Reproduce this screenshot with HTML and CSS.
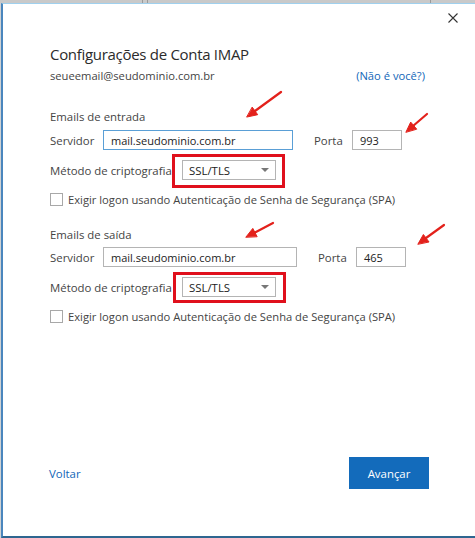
FILE: index.html
```html
<!DOCTYPE html>
<html lang="pt-BR">
<head>
<meta charset="utf-8">
<title>Configurações de Conta IMAP</title>
<link rel="stylesheet" href="styles.css">
</head>
<body>
<div class="backdrop"></div>
<div class="dialog">
  <div class="close-row">
    <svg class="close" width="10" height="10" viewBox="0 0 10 10"><path d="M0.5 0.5 L9.5 9.5 M9.5 0.5 L0.5 9.5" stroke="#333" stroke-width="1.1" fill="none"/></svg>
  </div>
  <h1 class="title">Configurações de Conta IMAP</h1>
  <div class="account-row">
    <span class="account">seueemail@seudominio.com.br</span>
    <a class="link">(Não é você?)</a>
  </div>

  <div class="section-title first">Emails de entrada</div>
  <div class="server-row">
    <span class="label server-label">Servidor</span>
    <div class="input input-focus in-server">mail.seudominio.com.br</div>
    <span class="label port-label">Porta</span>
    <div class="input in-port">993</div>
  </div>
  <div class="crypto-row">
    <span class="label crypto-label">Método de criptografia</span>
    <div class="select-wrap">
      <div class="select"><span>SSL/TLS</span><span class="caret"></span></div>
    </div>
  </div>
  <div class="check-row">
    <span class="checkbox"></span>
    <span class="label">Exigir logon usando Autenticação de Senha de Segurança (SPA)</span>
  </div>

  <div class="section-title second">Emails de saída</div>
  <div class="server-row out">
    <span class="label server-label">Servidor</span>
    <div class="input in-server wide">mail.seudominio.com.br</div>
    <span class="label port-label">Porta</span>
    <div class="input in-port">465</div>
  </div>
  <div class="crypto-row">
    <span class="label crypto-label">Método de criptografia</span>
    <div class="select-wrap alt">
      <div class="select"><span>SSL/TLS</span><span class="caret"></span></div>
    </div>
  </div>
  <div class="check-row">
    <span class="checkbox"></span>
    <span class="label">Exigir logon usando Autenticação de Senha de Segurança (SPA)</span>
  </div>

  <div class="footer">
    <a class="link back">Voltar</a>
    <button class="primary">Avançar</button>
  </div>
</div>

<svg class="arrows" width="475" height="538" viewBox="0 0 475 538">
  <g stroke="#e3211b" stroke-width="2.2" stroke-linecap="round" fill="#e3211b">
    <line x1="281" y1="92" x2="255" y2="111"/>
    <polygon points="247,117 257.7,114.7 252.4,107.4" stroke-width="1"/>
    <line x1="427" y1="114" x2="413.6" y2="125.5"/>
    <polygon points="406,132 410.7,122.1 416.5,128.9" stroke-width="1"/>
    <line x1="273" y1="223" x2="255" y2="232.4"/>
    <polygon points="246,237 252.8,228.4 257,236.4" stroke-width="1"/>
    <line x1="444" y1="225" x2="426" y2="238"/>
    <polygon points="418,244 423.4,234.5 428.8,241.7" stroke-width="1"/>
  </g>
</svg>
</body>
</html>
```

FILE: styles.css
```css
* { box-sizing: border-box; }

html, body {
  margin: 0;
  padding: 0;
}

body {
  width: 475px;
  height: 538px;
  overflow: hidden;
  background: #cfd2d4;
  font-family: "Open Sans", "Noto Sans", sans-serif;
  color: #3c3c3c;
  position: relative;
  padding: 3px 0 0 1px;
}

.backdrop {
  position: absolute;
  left: 0;
  top: 0;
  width: 475px;
  height: 3px;
  background: linear-gradient(to right, #c9c9c9 0, #c9c9c9 142px, #9a9a9a 142px, #9a9a9a 143px, #c9c9c9 143px, #c9c9c9 147px, #9a9a9a 147px, #9a9a9a 148px, #c9c9c9 148px, #c9c9c9 430px, #9a9a9a 430px, #9a9a9a 431px, #c9c9c9 431px);
}

.dialog {
  width: 474px;
  height: 535px;
  background: #ffffff;
  border-top: 1px solid #9fd0ee;
  border-left: 2px solid #4a86bd;
  border-bottom: 2px solid #2e6690;
  box-shadow: 0 1px 0 #7fb3dc;
  padding: 0 0 0 47px;
  display: flex;
  flex-direction: column;
}

.close-row {
  display: flex;
  justify-content: flex-end;
  padding: 9px 17px 0 0;
  height: 19px;
}

.close { display: block; }

.title {
  margin: 20px 0 0 0;
  font-size: 15px;
  font-weight: 400;
  line-height: 22px;
  color: #2b2b2b;
  letter-spacing: -0.3px;
}

.account-row {
  display: flex;
  justify-content: space-between;
  align-items: center;
  width: 375px;
  margin-top: 1px;
  height: 18px;
  font-size: 11.2px;
}

.account { color: #444; }

.link {
  color: #1166b8;
  text-decoration: none;
  cursor: pointer;
}

.label {
  font-size: 11.4px;
  color: #444;
  white-space: nowrap;
}

.section-title {
  font-size: 11.4px;
  line-height: 18px;
  height: 18px;
  color: #444;
}
.section-title.first { margin-top: 24px; }
.section-title.second { margin-top: 20px; }

.server-row {
  display: flex;
  align-items: center;
  height: 20px;
  margin-top: 4px;
}
.server-row.out { margin-top: 3px; }

.server-label { width: 53px; }

.input {
  height: 20px;
  border: 1px solid #b4b4b4;
  font-size: 11px;
  color: #222;
  display: flex;
  align-items: center;
  padding-left: 7px;
}
.input-focus { border-color: #5a9fd6; }
.in-server { width: 190px; }
.in-server.wide { width: 194px; }
.port-label { margin-left: 21px; width: 38px; }
.in-port { width: 50px; }

.crypto-row {
  display: flex;
  align-items: center;
  height: 20px;
  margin-top: 10px;
}

.crypto-label { width: 132px; }

.select-wrap {
  position: relative;
}
.select-wrap::after {
  content: "";
  position: absolute;
  left: -10px;
  top: -6px;
  right: -9px;
  bottom: -8px;
  border: 3px solid #e0101c;
  pointer-events: none;
}
.select-wrap.alt::after {
  left: -9px;
  top: -5px;
  right: -10px;
  bottom: -6px;
}

.select {
  width: 94px;
  height: 20px;
  border: 1px solid #b4b4b4;
  display: flex;
  align-items: center;
  justify-content: space-between;
  padding: 0 6px 0 6px;
  font-size: 11.4px;
  color: #222;
}

.caret {
  width: 0;
  height: 0;
  border-left: 4px solid transparent;
  border-right: 4px solid transparent;
  border-top: 4px solid #777;
}

.check-row {
  display: flex;
  align-items: center;
  gap: 5px;
  height: 13px;
  margin-top: 13px;
}

.check-row .label { font-size: 11.2px; }

.checkbox {
  width: 13px;
  height: 13px;
  border: 1px solid #a8a8a8;
  background: #fff;
}

.footer {
  margin-top: auto;
  margin-bottom: 47px;
  width: 379px;
  display: flex;
  justify-content: space-between;
  align-items: center;
}

.back {
  font-size: 11.4px;
  margin-left: -1px;
}

.primary {
  width: 80px;
  height: 32px;
  border: none;
  background: #136bbb;
  color: #fff;
  font-family: inherit;
  font-size: 11.4px;
  padding: 0;
}

.arrows {
  position: absolute;
  left: 0;
  top: 0;
  pointer-events: none;
}
```
